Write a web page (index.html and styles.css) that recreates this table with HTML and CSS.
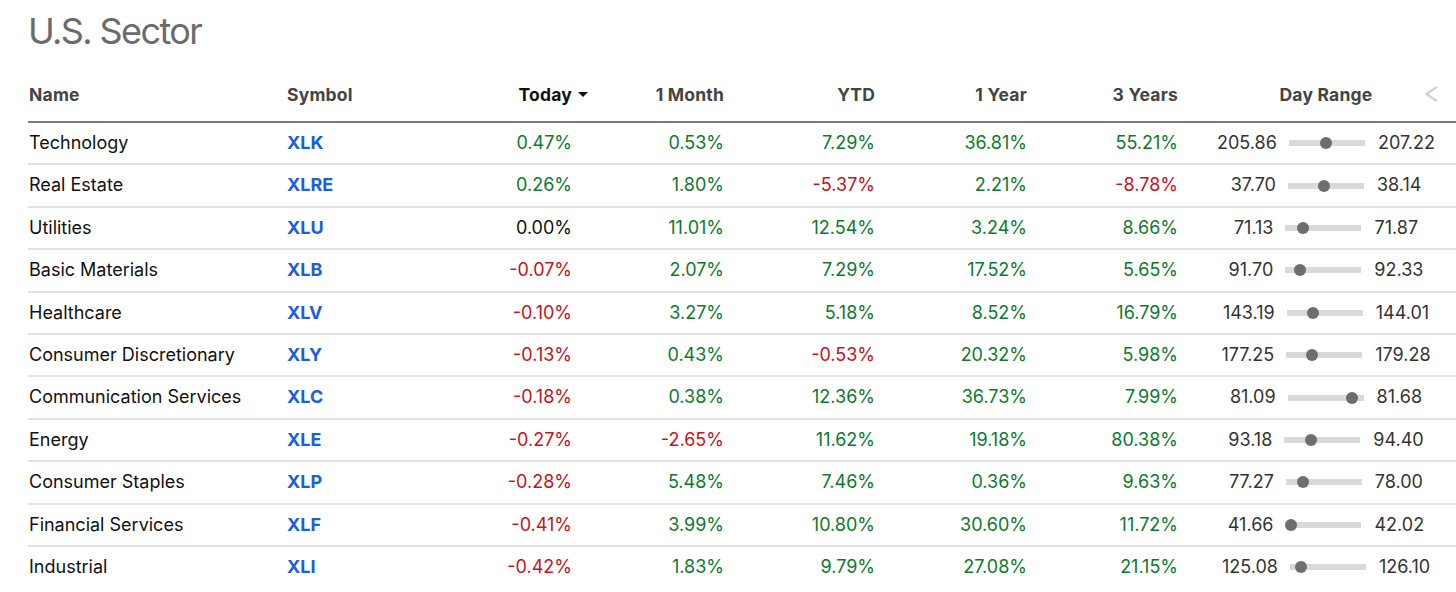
FILE: index.html
```html
<!DOCTYPE html>
<html lang="en">
<head>
<meta charset="utf-8">
<title>U.S. Sector</title>
<link rel="stylesheet" href="styles.css">
</head>
<body>
<div class="page">
  <h1 class="title">U.S. Sector</h1>
  <table class="sectors">
    <colgroup>
      <col class="c-name"><col class="c-sym"><col class="c-num"><col class="c-num"><col class="c-num2"><col class="c-num"><col class="c-num2"><col class="c-range">
    </colgroup>
    <thead>
      <tr>
        <th class="left">Name</th>
        <th class="left sym">Symbol</th>
        <th class="num active">Today<span class="sort"></span></th>
        <th class="num">1 Month</th>
        <th class="num">YTD</th>
        <th class="num">1 Year</th>
        <th class="num">3 Years</th>
        <th class="range">Day Range
          <svg class="chev" width="14" height="16" viewBox="0 0 14 16"><polyline points="12,1.5 2.5,8 12,14.5" fill="none" stroke="#d2d2d2" stroke-width="2.6" stroke-linecap="round" stroke-linejoin="round"/></svg>
        </th>
      </tr>
    </thead>
    <tbody>
      <tr><td>Technology</td><td class="sym"><a>XLK</a></td><td class="num up">0.47%</td><td class="num up">0.53%</td><td class="num up">7.29%</td><td class="num up">36.81%</td><td class="num up">55.21%</td><td class="range"><div class="dr"><span>205.86</span><div class="bar"><i style="left:31px"></i></div><span>207.22</span></div></td></tr>
      <tr><td>Real Estate</td><td class="sym"><a>XLRE</a></td><td class="num up">0.26%</td><td class="num up">1.80%</td><td class="num down">-5.37%</td><td class="num up">2.21%</td><td class="num down">-8.78%</td><td class="range"><div class="dr"><span>37.70</span><div class="bar"><i style="left:30px"></i></div><span>38.14</span></div></td></tr>
      <tr><td>Utilities</td><td class="sym"><a>XLU</a></td><td class="num">0.00%</td><td class="num up">11.01%</td><td class="num up">12.54%</td><td class="num up">3.24%</td><td class="num up">8.66%</td><td class="range"><div class="dr"><span>71.13</span><div class="bar"><i style="left:12px"></i></div><span>71.87</span></div></td></tr>
      <tr><td>Basic Materials</td><td class="sym"><a>XLB</a></td><td class="num down">-0.07%</td><td class="num up">2.07%</td><td class="num up">7.29%</td><td class="num up">17.52%</td><td class="num up">5.65%</td><td class="range"><div class="dr"><span>91.70</span><div class="bar"><i style="left:9px"></i></div><span>92.33</span></div></td></tr>
      <tr><td>Healthcare</td><td class="sym"><a>XLV</a></td><td class="num down">-0.10%</td><td class="num up">3.27%</td><td class="num up">5.18%</td><td class="num up">8.52%</td><td class="num up">16.79%</td><td class="range"><div class="dr"><span>143.19</span><div class="bar"><i style="left:20px"></i></div><span>144.01</span></div></td></tr>
      <tr><td>Consumer Discretionary</td><td class="sym"><a>XLY</a></td><td class="num down">-0.13%</td><td class="num up">0.43%</td><td class="num down">-0.53%</td><td class="num up">20.32%</td><td class="num up">5.98%</td><td class="range"><div class="dr"><span>177.25</span><div class="bar"><i style="left:20px"></i></div><span>179.28</span></div></td></tr>
      <tr><td>Communication Services</td><td class="sym"><a>XLC</a></td><td class="num down">-0.18%</td><td class="num up">0.38%</td><td class="num up">12.36%</td><td class="num up">36.73%</td><td class="num up">7.99%</td><td class="range"><div class="dr"><span>81.09</span><div class="bar"><i style="left:58px"></i></div><span>81.68</span></div></td></tr>
      <tr><td>Energy</td><td class="sym"><a>XLE</a></td><td class="num down">-0.27%</td><td class="num down">-2.65%</td><td class="num up">11.62%</td><td class="num up">19.18%</td><td class="num up">80.38%</td><td class="range"><div class="dr"><span>93.18</span><div class="bar"><i style="left:21px"></i></div><span>94.40</span></div></td></tr>
      <tr><td>Consumer Staples</td><td class="sym"><a>XLP</a></td><td class="num down">-0.28%</td><td class="num up">5.48%</td><td class="num up">7.46%</td><td class="num up">0.36%</td><td class="num up">9.63%</td><td class="range"><div class="dr"><span>77.27</span><div class="bar"><i style="left:11px"></i></div><span>78.00</span></div></td></tr>
      <tr><td>Financial Services</td><td class="sym"><a>XLF</a></td><td class="num down">-0.41%</td><td class="num up">3.99%</td><td class="num up">10.80%</td><td class="num up">30.60%</td><td class="num up">11.72%</td><td class="range"><div class="dr"><span>41.66</span><div class="bar"><i style="left:0px"></i></div><span>42.02</span></div></td></tr>
      <tr><td>Industrial</td><td class="sym"><a>XLI</a></td><td class="num down">-0.42%</td><td class="num up">1.83%</td><td class="num up">9.79%</td><td class="num up">27.08%</td><td class="num up">21.15%</td><td class="range"><div class="dr"><span>125.08</span><div class="bar"><i style="left:5px"></i></div><span>126.10</span></div></td></tr>
    </tbody>
  </table>
</div>
</body>
</html>
```
FILE: styles.css
```css
html, body {
  margin: 0;
  padding: 0;
  background: #fff;
  overflow: hidden;
}
body {
  font-family: Inter, "Liberation Sans", Arial, sans-serif;
  color: #111;
}
.page {
  padding: 9px 0 0 28px;
  width: 1460px;
}
.title {
  margin: 0;
  font-size: 36px;
  line-height: 44px;
  font-weight: 400;
  color: #6b6b6b;
  letter-spacing: -1.6px;
}
.sectors {
  border-collapse: collapse;
  table-layout: fixed;
  width: 1446px;
}
.c-name { width: 252px; }
.c-sym { width: 140px; }
.c-num { width: 152px; }
.c-num2 { width: 151px; }
.c-range { width: 296px; }

th {
  font-size: 17.5px;
  font-weight: 700;
  letter-spacing: 0.2px;
  color: #444;
  line-height: 20px;
  padding: 32px 0 16px;
  border-bottom: 2px solid #777a7f;
  white-space: nowrap;
}
th.left { text-align: left; padding-left: 1px; }
th.sym { padding-left: 7px; }
th.num { text-align: right; }
th.active { color: #111; }
.sort {
  display: inline-block;
  width: 0;
  height: 0;
  border-left: 5px solid transparent;
  border-right: 5px solid transparent;
  border-top: 5px solid #111;
  margin-left: 6px;
  margin-right: -16px;
  vertical-align: 4px;
}
th.range {
  text-align: center;
  position: relative;
}
.chev {
  position: absolute;
  right: 36px;
  top: 33px;
}

td {
  font-size: 18px;
  line-height: 20.4px;
  padding: 10px 0;
  border-bottom: 2px solid #e2e2e2;
  white-space: nowrap;
}
tbody tr:last-child td { border-bottom: none; }
td:first-child { padding-left: 1px; }
td.sym { padding-left: 7px; }
td.sym a {
  color: #1a5fde;
  font-weight: 700;
}
td.num { text-align: right; padding-right: 0; }
td.up { color: #0b7a2e; }
td.down { color: #c8111c; }

.dr {
  display: flex;
  justify-content: center;
  align-items: center;
  color: #333;
}
.bar {
  position: relative;
  width: 76px;
  height: 6px;
  background: #d9d9d9;
  margin: 0 13px 0 12px;
}
.bar i {
  position: absolute;
  top: -3px;
  width: 12px;
  height: 12px;
  border-radius: 50%;
  background: #6e6e6e;
}
```
